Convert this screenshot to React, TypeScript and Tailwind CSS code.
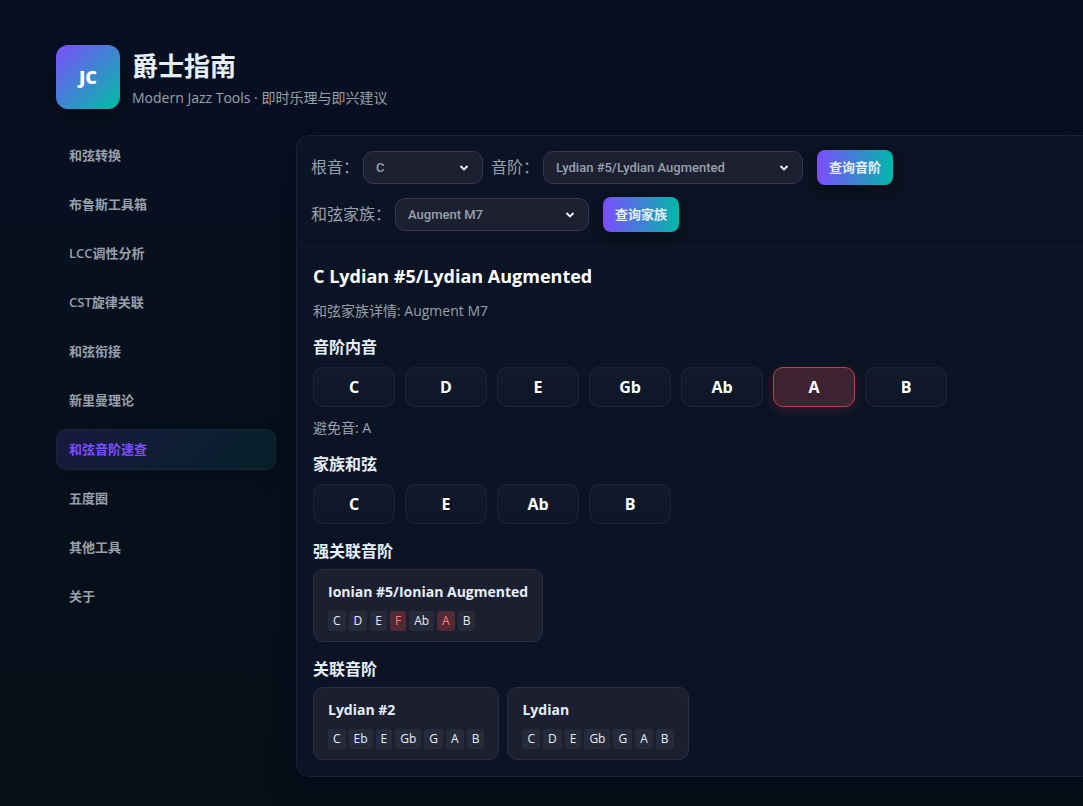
import { useState } from 'react'

const NAV = ['和弦转换', '布鲁斯工具箱', 'LCC调性分析', 'CST旋律关联', '和弦衔接', '新里曼理论', '和弦音阶速查', '五度圈', '其他工具', '关于']

const ROOTS = ['C', 'Db', 'D', 'Eb', 'E', 'F', 'Gb', 'G', 'Ab', 'A', 'Bb', 'B']
const SCALES = ['Lydian #5/Lydian Augmented', 'Ionian #5/Ionian Augmented', 'Lydian #2', 'Lydian']
const FAMILIES = ['Augment M7', 'Major 7', 'Minor 7', 'Dominant 7']

interface Scale { name: string; notes: string[]; avoid: string[] }

const STRONG: Scale[] = [
  { name: 'Ionian #5/Ionian Augmented', notes: ['C', 'D', 'E', 'F', 'Ab', 'A', 'B'], avoid: ['F', 'A'] },
]
const RELATED: Scale[] = [
  { name: 'Lydian #2', notes: ['C', 'Eb', 'E', 'Gb', 'G', 'A', 'B'], avoid: [] },
  { name: 'Lydian', notes: ['C', 'D', 'E', 'Gb', 'G', 'A', 'B'], avoid: [] },
]

const BUTTON = 'ml-1.5 h-[35px] rounded-lg bg-linear-to-r/srgb from-[#7c4dff] to-[#00b8a9] px-3 text-[13px] font-semibold text-[#e6eef8] shadow-[0_6px_18px_rgba(0,0,0,0.4)]'

function Select({ label, options, width }: { label: string; options: string[]; width: string }) {
  const [value, setValue] = useState(options[0])
  return (
    <label className="flex items-center gap-1 text-base leading-6 text-[#98a0ab]">
      <span className="pb-0.5">{label}</span>
      <span className={`relative block ${width}`}>
        <select
          value={value}
          onChange={e => setValue(e.target.value)}
          className="block h-[33px] w-full appearance-none rounded-[10px] border border-[#33384a] bg-[#1c2031] pl-3 font-['Roboto','Noto_Sans_CJK_SC',sans-serif] text-[13px] font-medium text-[#98a0ab] focus:outline-none"
        >
          {options.map(o => <option key={o}>{o}</option>)}
        </select>
        <svg viewBox="0 0 10 8" className="pointer-events-none absolute top-[13px] right-3.5 h-2 w-2.5" fill="none" stroke="#f1f5fb" strokeWidth="1.8">
          <path d="M1.5 2 5 5.5 8.5 2" />
        </svg>
      </span>
    </label>
  )
}

function Heading({ children }: { children: string }) {
  return <h3 className="text-base font-semibold leading-6 text-[#e6eef8]">{children}</h3>
}

function Notes({ notes, avoid = [] }: { notes: string[]; avoid?: string[] }) {
  return (
    <div className="flex flex-wrap gap-2.5">
      {notes.map(n => (
        <div
          key={n}
          className={`flex h-10 w-[82px] items-center justify-center rounded-[10px] border text-base font-bold text-white ${avoid.includes(n) ? 'border-[#b4454b] bg-[#3d2330] shadow-[0_4px_12px_rgba(255,82,82,0.15)]' : 'border-white/5 bg-linear-to-b from-white/[0.03] to-white/[0.015]'}`}
        >
          {n}
        </div>
      ))}
    </div>
  )
}

function ScaleCards({ scales }: { scales: Scale[] }) {
  return (
    <div className="flex flex-wrap gap-2">
      {scales.map(s => (
        <div key={s.name} className="rounded-[10px] border border-[#2a3040] bg-[#1b1f30] px-3.5 py-2.5">
          <h4 className="mb-2 text-sm font-bold leading-[23px] text-[#e6eef8]">{s.name}</h4>
          <div className="flex gap-[3px]">
            {s.notes.map(n => (
              <span key={n} className={`rounded-[3px] px-[5px] text-xs leading-5 ${s.avoid.includes(n) ? 'bg-[#522a36] text-[#ff7b7b]' : 'bg-[#262b3b] text-[#e6eef8]'}`}>{n}</span>
            ))}
          </div>
        </div>
      ))}
    </div>
  )
}

export default function App() {
  const [active, setActive] = useState('和弦音阶速查')

  return (
    <div className="min-h-screen overflow-hidden bg-linear-to-b from-[#071022] to-[#061018] pt-[45px] pb-7 pl-14 font-['Open_Sans','Noto_Sans_CJK_SC',sans-serif] text-[#e6eef8]">
      <header className="mb-[26px] flex items-center gap-3">
        <div className="flex h-16 w-16 items-center justify-center rounded-xl bg-linear-135/srgb from-[#7c4dff] to-[#00bfa5] text-lg font-extrabold text-white shadow-[0_8px_24px_rgba(0,0,0,0.3)]">JC</div>
        <div className="pt-0.5">
          <h1 className="text-[26px] font-bold leading-9">爵士指南</h1>
          <p className="mt-1 text-sm leading-5 text-[#98a0ab]">Modern Jazz Tools · 即时乐理与即兴建议</p>
        </div>
      </header>

      <div className="flex items-start gap-5">
        <nav className="flex w-[220px] shrink-0 flex-col gap-2">
          {NAV.map(item => (
            <button
              key={item}
              onClick={() => setActive(item)}
              className={`h-[41px] rounded-[10px] border px-3 text-left text-[13px] font-semibold ${item === active ? 'border-[#1a2836] bg-linear-135/srgb from-[#7c4dff]/15 to-[#00bfa5]/10 text-[#7c4dff] shadow-[0_6px_18px_rgba(0,0,0,0.2)]' : 'border-transparent text-[#98a0ab]'}`}
            >
              {item}
            </button>
          ))}
        </nav>

        <main className="min-w-0 flex-1 rounded-l-[14px] border border-r-0 border-[#1a2232] bg-[#0b1424] shadow-[0_10px_30px_rgba(2,6,23,0.6)]">
          <div className="space-y-3 border-b border-white/[0.03] p-3.5">
            <div className="flex flex-wrap items-center gap-2">
              <Select label="根音：" options={ROOTS} width="w-[120px]" />
              <Select label="音阶：" options={SCALES} width="w-[260px]" />
              <button className={BUTTON}>查询音阶</button>
            </div>
            <div className="flex flex-wrap items-center gap-2">
              <Select label="和弦家族：" options={FAMILIES} width="w-[194px]" />
              <button className={BUTTON}>查询家族</button>
            </div>
          </div>

          <div className="space-y-3 p-4">
            <div>
              <h2 className="text-lg font-bold leading-[26px] text-white">C Lydian #5/Lydian Augmented</h2>
              <p className="mt-2.5 text-sm leading-6 text-[#98a0ab]">和弦家族详情: Augment M7</p>
            </div>
            <section className="space-y-2">
              <Heading>音阶内音</Heading>
              <Notes notes={['C', 'D', 'E', 'Gb', 'Ab', 'A', 'B']} avoid={['A']} />
              <p className="text-sm leading-[25px] text-[#98a0ab]">避免音: A</p>
            </section>
            <section className="space-y-2">
              <Heading>家族和弦</Heading>
              <Notes notes={['C', 'E', 'Ab', 'B']} />
            </section>
            <section className="space-y-1.5 pt-[3px]">
              <Heading>强关联音阶</Heading>
              <ScaleCards scales={STRONG} />
            </section>
            <section className="space-y-1.5 pt-[3px]">
              <Heading>关联音阶</Heading>
              <ScaleCards scales={RELATED} />
            </section>
          </div>
        </main>
      </div>
    </div>
  )
}
